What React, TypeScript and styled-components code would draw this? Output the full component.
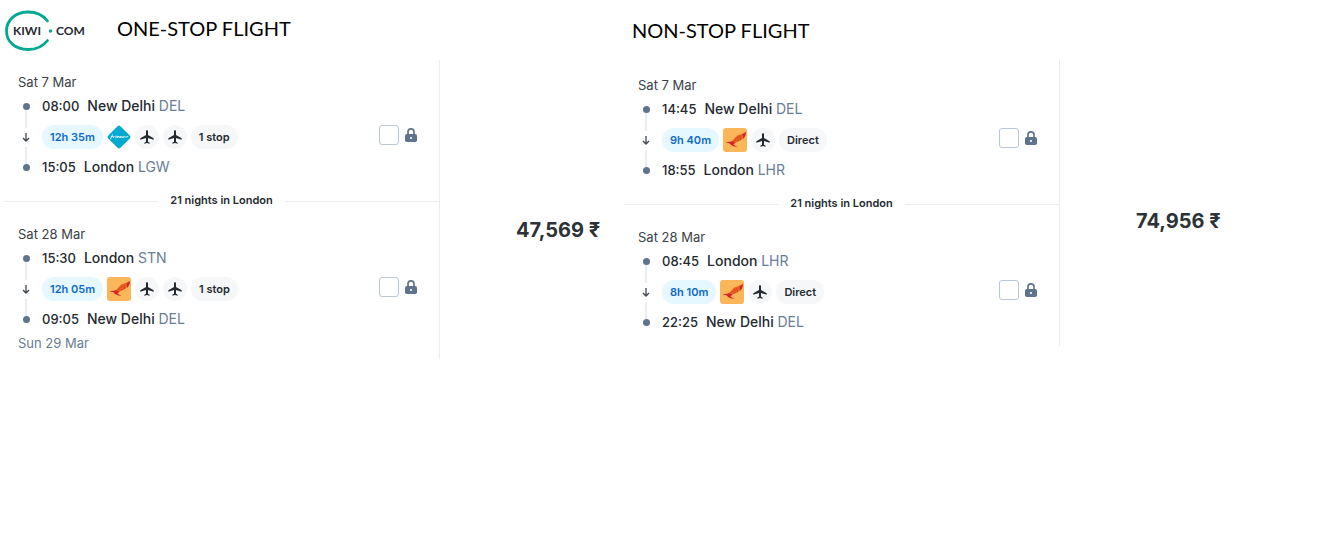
import React from 'react';
import styled, { createGlobalStyle } from 'styled-components';
import { MdLocalAirport } from 'react-icons/md';

const GlobalStyle = createGlobalStyle`
  *, *::before, *::after { box-sizing: border-box; }
  body {
    margin: 0;
    background: #fff;
    color: #252a31;
    font-family: Inter, "Liberation Sans", sans-serif;
    font-size: 13px;
    line-height: 24px;
  }
`;

const Page = styled.main`
  display: grid;
  grid-template-columns: 620fr 722fr;
  align-items: start;
`;

const Column = styled.section`
  min-width: 0;
  padding-left: 4px;
`;

const Header = styled.header<{ $drop: number }>`
  display: flex;
  align-items: center;
  gap: 30px;
  height: 60px;
  padding: ${(p) => p.$drop}px 0 0 0;
`;

const Title = styled.h1<{ $indent?: number }>`
  margin: 0 0 4px ${(p) => p.$indent ?? 0}px;
  color: #000;
  font-family: Lato, "Liberation Sans", sans-serif;
  font-size: 20px;
  font-weight: 400;
  line-height: 28px;
  white-space: nowrap;
`;

const Offer = styled.article`
  display: flex;
  align-items: flex-start;
`;

const Itinerary = styled.div<{ $top: number; $bottom: number }>`
  flex: 0 1 436px;
  padding: ${(p) => p.$top}px 0 ${(p) => p.$bottom}px;
  border-right: 1px solid #e8edf1;
`;

const Segment = styled.section`
  padding: 0 21px 0 14px;
`;

const DateLine = styled.p<{ $muted?: boolean }>`
  margin: 0;
  color: ${(p) => (p.$muted ? '#697d95' : '#3b4148')};
`;

const SegmentBody = styled.div`
  display: flex;
  gap: 8px;
`;

const Timeline = styled.div`
  display: flex;
  flex-direction: column;
  align-items: center;
  width: 16px;
  padding: 9px 0 8px;
`;

const Dot = styled.span`
  width: 7px;
  height: 7px;
  border-radius: 50%;
  background: #5f738c;
`;

const Line = styled.span`
  flex: 1;
  width: 2px;
  background: #e8edf1;
`;

const Arrow = styled.svg`
  width: 12px;
  height: 12px;
  margin: 3px 0 4px;
`;

const Legs = styled.div`
  flex: 1;
  min-width: 0;
`;

const Stop = styled.div`
  display: flex;
  gap: 8px;
  font-weight: 500;
  white-space: nowrap;
`;

const Place = styled.span`
  font-size: 14px;
`;

const Code = styled.span`
  color: #697d95;
  font-weight: 400;
`;

const Badges = styled.div`
  display: flex;
  gap: 4px;
  padding: 7px 0 6px;
`;

const Badge = styled.span<{ $info?: boolean }>`
  height: 24px;
  padding: 0 8px;
  border-radius: 12px;
  background: ${(p) => (p.$info ? '#e5f7ff' : '#f5f7f9')};
  color: ${(p) => (p.$info ? '#0f6ac9' : '#252a31')};
  font-size: 11px;
  font-weight: 600;
  white-space: nowrap;
`;

const PlaneBadge = styled.span`
  display: grid;
  place-items: center;
  width: 24px;
  height: 24px;
  border-radius: 50%;
  background: #f5f7f9;
`;

const Carrier = styled.svg`
  flex: none;
  width: 24px;
  height: 24px;
`;

const LockLabel = styled.label`
  display: flex;
  align-items: center;
  gap: 5px;
  padding-bottom: 4px;
`;

const LockBox = styled.input`
  appearance: none;
  width: 20px;
  height: 20px;
  margin: 0;
  border: 1px solid #bac7d5;
  border-radius: 3px;
  background: #fff;
  &:checked { background: #5f738c; }
`;

const LockImage = styled.svg`
  width: 14px;
  height: 16px;
`;

const Stay = styled.div`
  display: flex;
  align-items: center;
  gap: 12px;
  margin: 11px 0 12px;
  font-size: 11px;
  font-weight: 600;
  line-height: 20px;
  white-space: nowrap;

  &::before, &::after {
    content: "";
    flex: 1;
    height: 1px;
    margin-top: 2px;
    background: #e8edf1;
  }
`;

const Price = styled.p<{ $top: number }>`
  flex: 1;
  margin: 0;
  padding: ${(p) => p.$top}px 0 0 76px;
  color: #2c3238;
  font-family: Inter, "Noto Sans", sans-serif;
  font-size: 20px;
  font-weight: 700;
  line-height: 28px;
  white-space: nowrap;
`;

const LogoImage = styled.svg`
  flex: none;
  width: 83px;
  height: 42px;
`;

const Logo = () => (
  <LogoImage viewBox="0 0 83 42" role="img" aria-label="Kiwi.com">
    <path
      d="M43.500 12C39 6 32 3 24 3C11.500 3 2.500 11 2.500 22S11.500 40.500 24 40.500C32 40.500 39 37.500 43.500 31.500"
      fill="none"
      stroke="#00a991"
      strokeWidth="2.800"
      strokeLinecap="round"
    />
    <circle cx="46.500" cy="22" r="1.700" fill="#00a991" />
    <g fill="#252a31" fontFamily="Lato, sans-serif" fontSize="12" fontWeight="700">
      <text x="9" y="26">KIWI</text>
      <text x="52" y="26">COM</text>
    </g>
  </LogoImage>
);

const Lock = () => (
  <LockImage viewBox="0 0 14 16" aria-hidden="true">
    <path d="M4 7.500V4.800a3 3 0 0 1 6 0V7.500" fill="none" stroke="#5f738c" strokeWidth="1.700" />
    <rect x="1" y="7" width="12" height="8" rx="1.800" fill="#5f738c" />
    <circle cx="7" cy="11" r="1.100" fill="#fff" />
  </LockImage>
);

type CarrierName = 'blue' | 'india';

const CarrierLogo = ({ name }: { name: CarrierName }) =>
  name === 'blue' ? (
    <Carrier viewBox="0 0 24 24" aria-hidden="true">
      <rect x="3.400" y="3.400" width="17.200" height="17.200" rx="2" fill="#00a9d2" transform="rotate(45 12 12)" />
      <path
        d="M3.500 14L5.500 9.800M4.300 11.500H6M6.500 12.500C8 11.500 7 10.500 6.500 12.500M9 11L8.700 12.800L10.500 11V12.800L12 11V12.800L13.500 11.300V12.800L15 11.500V12.600L16.500 11.500V12.500L18 11.500L18.500 12.300L21 11.500"
        fill="none"
        stroke="#e4f8fd"
        strokeWidth="0.900"
        strokeLinecap="round"
        strokeLinejoin="round"
      />
    </Carrier>
  ) : (
    <Carrier viewBox="0 0 24 24" aria-hidden="true">
      <rect width="24" height="24" rx="3" fill="#fbb65a" />
      <path d="M8 13.500C11 12.500 12 8.500 15 7.200C17.500 6.300 20 6.200 22.500 4C22.800 7.500 20.500 10.500 18 12C15.500 13.600 13 14.200 11 15.300Z" fill="#e8601f" />
      <path d="M2 13.800C5 14.300 7 13.800 9 13.200L12.500 14.500L10.500 16.200C11.500 17.500 13 18.300 14.500 18.700C11 19 8 17.500 6.500 15.200C5 15 3.500 14.600 2 13.800Z" fill="#d8202f" />
      <path d="M19.300 6.300C20.600 6 21.700 5.200 22.800 3.800C23.200 6.500 22 9.200 19.800 11.200C20.300 9.500 20.300 8 19.300 6.300Z" fill="#d3202d" />
      <path d="M11.500 12h1M14 10h1M14.500 12.500h1M16.500 9h1M17 11.200h1" stroke="#cf2a2a" strokeWidth="1.200" />
    </Carrier>
  );

interface Leg {
  id: string;
  date: string;
  from: [string, string, string];
  to: [string, string, string];
  duration: string;
  carrier: CarrierName;
  planes: number;
  stops: string;
  arrivalDate?: string;
}

const FlightSegment = ({ leg }: { leg: Leg }) => (
  <Segment>
    <DateLine>{leg.date}</DateLine>
    <SegmentBody>
      <Timeline aria-hidden="true">
        <Dot />
        <Line />
        <Arrow viewBox="0 0 12 12">
          <path d="M6 2V10M3 7L6 10L9 7" fill="none" stroke="#3f464e" strokeWidth="1.300" />
        </Arrow>
        <Line />
        <Dot />
      </Timeline>
      <Legs>
        <Stop>
          <time>{leg.from[0]}</time>
          <Place>{leg.from[1]} <Code>{leg.from[2]}</Code></Place>
        </Stop>
        <Badges>
          <Badge $info>{leg.duration}</Badge>
          <CarrierLogo name={leg.carrier} />
          {Array.from({ length: leg.planes }, (_, i) => (
            <PlaneBadge key={i}><MdLocalAirport size={16} /></PlaneBadge>
          ))}
          <Badge>{leg.stops}</Badge>
        </Badges>
        <Stop>
          <time>{leg.to[0]}</time>
          <Place>{leg.to[1]} <Code>{leg.to[2]}</Code></Place>
        </Stop>
      </Legs>
      <LockLabel htmlFor={leg.id}>
        <LockBox id={leg.id} type="checkbox" aria-label={`Lock ${leg.date} flight`} />
        <Lock />
      </LockLabel>
    </SegmentBody>
    {leg.arrivalDate && <DateLine $muted>{leg.arrivalDate}</DateLine>}
  </Segment>
);

const oneStop: Leg[] = [
  { id: 'one-out', date: 'Sat 7 Mar', from: ['08:00', 'New Delhi', 'DEL'], to: ['15:05', 'London', 'LGW'], duration: '12h 35m', carrier: 'blue', planes: 2, stops: '1 stop' },
  { id: 'one-back', date: 'Sat 28 Mar', from: ['15:30', 'London', 'STN'], to: ['09:05', 'New Delhi', 'DEL'], duration: '12h 05m', carrier: 'india', planes: 2, stops: '1 stop', arrivalDate: 'Sun 29 Mar' },
];

const nonStop: Leg[] = [
  { id: 'non-out', date: 'Sat 7 Mar', from: ['14:45', 'New Delhi', 'DEL'], to: ['18:55', 'London', 'LHR'], duration: '9h 40m', carrier: 'india', planes: 1, stops: 'Direct' },
  { id: 'non-back', date: 'Sat 28 Mar', from: ['08:45', 'London', 'LHR'], to: ['22:25', 'New Delhi', 'DEL'], duration: '8h 10m', carrier: 'india', planes: 1, stops: 'Direct' },
];

export default function App() {
  return (
    <>
      <GlobalStyle />
      <Page>
        <Column>
          <Header $drop={0}>
            <Logo />
            <Title>ONE-STOP FLIGHT</Title>
          </Header>
          <Offer>
            <Itinerary $top={10} $bottom={4}>
              <FlightSegment leg={oneStop[0]} />
              <Stay>21 nights in London</Stay>
              <FlightSegment leg={oneStop[1]} />
            </Itinerary>
            <Price $top={156}>47,569 ₹</Price>
          </Offer>
        </Column>
        <Column>
          <Header $drop={4}>
            <Title $indent={8}>NON-STOP FLIGHT</Title>
          </Header>
          <Offer>
            <Itinerary $top={13} $bottom={12}>
              <FlightSegment leg={nonStop[0]} />
              <Stay>21 nights in London</Stay>
              <FlightSegment leg={nonStop[1]} />
            </Itinerary>
            <Price $top={147}>74,956 ₹</Price>
          </Offer>
        </Column>
      </Page>
    </>
  );
}
